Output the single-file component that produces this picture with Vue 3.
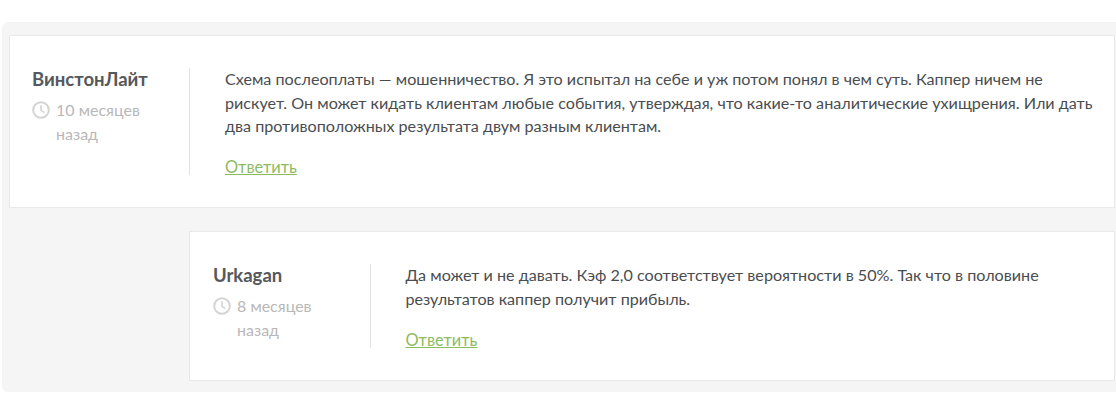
<script setup>
const comments = [
  {
    name: 'ВинстонЛайт',
    age: '10 месяцев назад',
    text: 'Схема послеоплаты — мошенничество. Я это испытал на себе и уж потом понял в чем суть. Каппер ничем не рискует. Он может кидать клиентам любые события, утверждая, что какие-то аналитические ухищрения. Или дать два противоположных результата двум разным клиентам.',
    reply: false
  },
  {
    name: 'Urkagan',
    age: '8 месяцев назад',
    text: 'Да может и не давать. Кэф 2,0 соответствует вероятности в 50%. Так что в половине результатов каппер получит прибыль.',
    reply: true
  }
]
</script>

<template>
  <div class="page">
    <section class="thread">
      <article v-for="c in comments" :key="c.name" class="card" :class="{ nested: c.reply }">
        <div class="author">
          <div class="name">{{ c.name }}</div>
          <div class="meta">
            <svg class="clock" viewBox="0 0 18 18" width="18" height="18" fill="none" stroke="#d4d4d4" stroke-width="2">
              <circle cx="9" cy="9" r="7.8" />
              <path d="M9 4.2V9.4L12.4 11.6" stroke-width="1.6" />
            </svg>
            <span class="age">{{ c.age }}</span>
          </div>
        </div>
        <div class="body">
          <p class="text">{{ c.text }}</p>
          <a class="answer" href="#" @click.prevent>Ответить</a>
        </div>
      </article>
    </section>
  </div>
</template>

<style>
html, body { margin: 0; background: #fff; }
</style>

<style scoped>
.page {
  width: 1116px;
  height: 400px;
  padding: 22px 0 8px 2px;
  box-sizing: border-box;
  font-family: Lato, "Open Sans", "Liberation Sans", sans-serif;
  overflow: hidden;
}
.thread {
  height: 370px;
  box-sizing: border-box;
  padding: 13px 1px 0 7px;
  background: #f5f5f5;
  border-radius: 6px 0 0 6px;
  display: flex;
  flex-direction: column;
  gap: 23px;
}
.card {
  display: flex;
  background: #fff;
  border: 1px solid #e9e9e9;
  padding: 32px 0;
}
.nested { margin-left: 180px; }
.author {
  width: 157px;
  box-sizing: border-box;
  flex: none;
  padding-left: 22px;
}
.nested .author {
  width: 157.5px;
  padding-left: 23px;
}
.name {
  font-size: 18.5px;
  font-weight: 700;
  line-height: 22px;
  color: #55585c;
}
.meta {
  display: flex;
  gap: 6px;
  margin-top: 8px;
}
.clock { flex: none; margin-top: 3px; }
.age {
  font-size: 16px;
  line-height: 24px;
  color: #b8b8b8;
}
.body {
  flex: 1;
  margin-left: 22px;
  padding-left: 35px;
  padding-right: 5px;
  border-left: 1px solid #e2e2e2;
}
.text {
  margin: -1px 0 0;
  font-size: 16.15px;
  line-height: 23.6px;
  color: #4a4d50;
}
.nested .text { line-height: 24px; }
.answer {
  display: block;
  margin-top: 21.2px;
  font-size: 16.4px;
  line-height: 16px;
  color: #8dbb62;
  text-decoration: underline;
}
.nested .answer { margin-top: 21px; }
</style>
